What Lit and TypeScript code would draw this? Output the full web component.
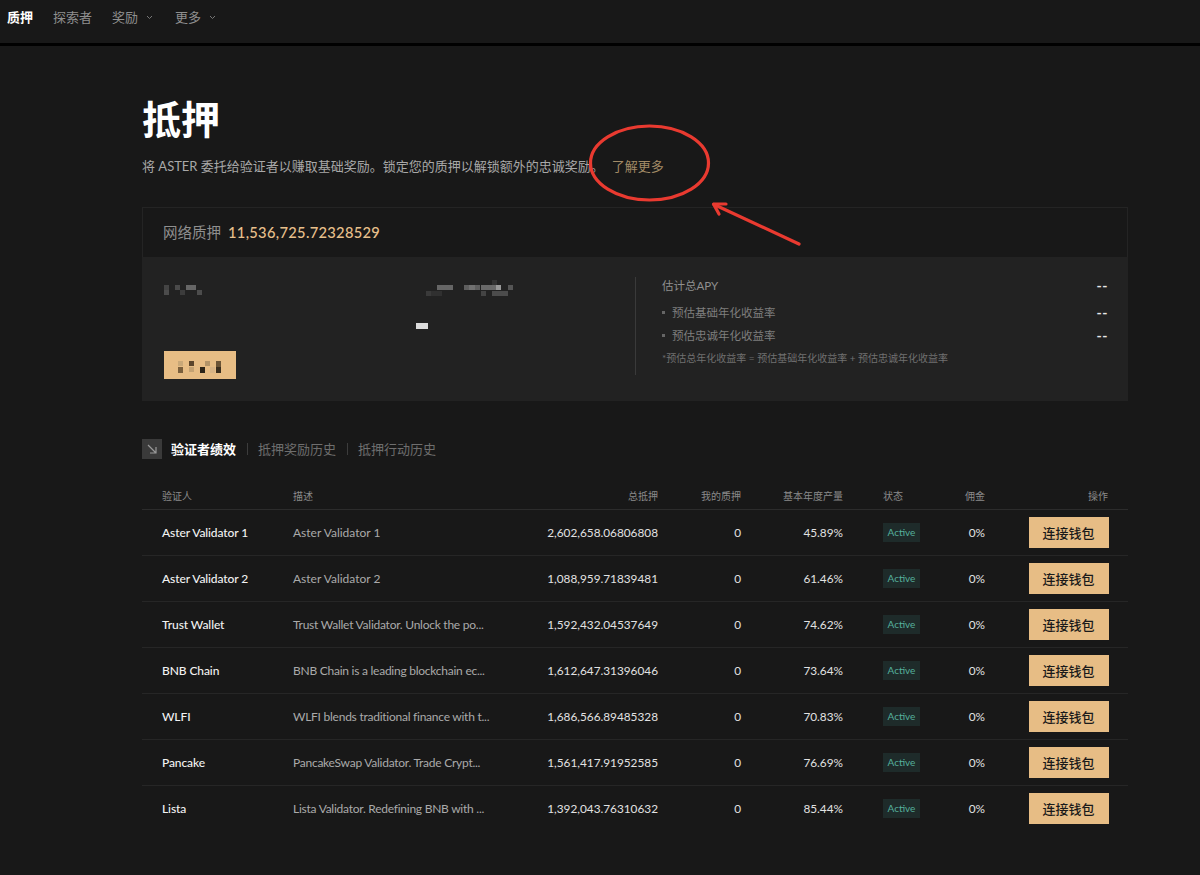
import { LitElement, html, css, svg } from "lit";
import { customElement } from "lit/decorators.js";

const rows = [
  ["Aster Validator 1", "Aster Validator 1", "2,602,658.06806808", "45.89%", false],
  ["Aster Validator 2", "Aster Validator 2", "1,088,959.71839481", "61.46%", false],
  ["Trust Wallet", "Trust Wallet Validator. Unlock the po...", "1,592,432.04537649", "74.62%", true],
  ["BNB Chain", "BNB Chain is a leading blockchain ec...", "1,612,647.31396046", "73.64%", true],
  ["WLFI", "WLFI blends traditional finance with t...", "1,686,566.89485328", "70.83%", true],
  ["Pancake", "PancakeSwap Validator. Trade Crypt...", "1,561,417.91952585", "76.69%", true],
  ["Lista", "Lista Validator. Redefining BNB with ...", "1,392,043.76310632", "85.44%", true],
] as const;

type Px = [number, number, number, number, string];
const mosaicA: Px[] = [
  [0, 0, 5, 5, "#444"], [0, 5, 5, 5, "#4c4c4c"], [11, 0, 5, 5, "#4a4a4a"], [16, 5, 5, 5, "#3c3c3c"],
  [22, 0, 10, 5, "#666"], [33, 5, 5, 5, "#4c4c4c"],
];
const mosaicB: Px[] = [
  [0, 6, 5, 5, "#3a3a3a"], [5, 6, 11, 5, "#303030"], [11, 0, 16, 5, "#666"], [38, 0, 16, 5, "#5e5e5e"], [43, 0, 6, 5, "#707070"],
  [55, 0, 16, 5, "#6a6a6a"], [70, 0, 5, 5, "#999"], [66, 6, 5, 5, "#4a4a4a"], [55, 6, 5, 5, "#444"], [66, -5, 5, 5, "#333"], [82, 0, 5, 5, "#555"],
  [66, 6, 16, 5, "#4c4c4c"],
];
const mosaicC: Px[] = [
  [0, 0, 5, 5, "#c9a878"], [0, 6, 5, 6, "#7a5f3c"], [11, 0, 5, 5, "#5c452b"], [11, 6, 5, 5, "#c4a273"],
  [22, 6, 5, 6, "#2c2418"], [27, 0, 5, 5, "#b39468"], [32, 6, 5, 6, "#d8b485"], [38, 0, 5, 6, "#6b5436"], [38, 6, 5, 6, "#3a2e1e"],
];

@customElement("app-root")
export class AppRoot extends LitElement {
  static styles = css`
    :host {
      display: block;
      position: relative;
      height: 875px;
      overflow: hidden;
      background: #181818;
      color: #fff;
      font-family: "Lato", "Noto Sans CJK SC", sans-serif;
    }
    nav {
      display: flex;
      align-items: center;
      height: 43px;
      padding: 0 7px 10px;
      box-sizing: border-box;
      gap: 20px;
      font-size: 13px;
      color: #8f8f8f;
    }
    .navline { height: 3px; background: #000; }
    nav .on { color: #fff; font-weight: 700; }
    nav .item { display: flex; align-items: center; gap: 8px; margin-right: 2px; }
    nav svg { width: 7px; height: 5px; margin-top: 2px; }
    main { padding: 0 72px 0 142px; }
    h1 {
      margin: 0;
      padding-top: 48px;
      font-size: 39px;
      line-height: 50px;
      font-weight: 700;
    }
    .sub {
      margin-top: 11px;
      font-size: 13px;
      line-height: 22px;
      color: #a8a8a8;
    }
    .sub a { color: #a28a66; margin-left: 8px; }
    .card { margin-top: 30px; }
    .cardhead {
      height: 50px;
      box-sizing: border-box;
      border: 1px solid #242424;
      border-bottom: 0;
      display: flex;
      align-items: center;
      padding: 0 20px 2px;
      gap: 7px;
      font-size: 14.5px;
      color: #8f8f8f;
    }
    .cardhead b { color: #e8c08c; font-weight: 500; font-size: 14.7px; letter-spacing: 0.3px; }
    .cardbody {
      height: 144px;
      background: #222;
      display: grid;
      grid-template-columns: 471px 1fr;
      padding: 18px 20px 27px 22px;
      box-sizing: border-box;
    }
    .mos { display: block; }
    .leftgrid { display: grid; grid-template-columns: 262px 1fr; height: 100%; }
    .col { display: flex; flex-direction: column; }
    .mb { margin-top: 5px; }
    .dash { width: 12px; height: 6px; background: #dcdcdc; margin: 27px 0 0 -10px; }
    .fakebtn {
      width: 72px;
      height: 27.5px;
      background: #e7bd85;
      margin-top: 55px;
      display: flex;
      align-items: center;
      justify-content: center;
    }
    .apy {
      border-left: 1px solid #3a3a3a;
      padding-left: 26px;
      margin-top: 2px;
      height: 98px;
      font-size: 11.5px;
      color: #7e7e7e;
    }
    .apyrow { display: flex; justify-content: space-between; align-items: center; height: 23px; }
    .apyrow.top { color: #8f8f8f; height: 16px; margin-bottom: 7.5px; }
    .apyrow .v { color: #e8e8e8; font-weight: 700; font-size: 14px; letter-spacing: 0.5px; }
    .apyrow .l { display: flex; align-items: center; gap: 7px; }
    .dot { width: 3px; height: 3px; background: #666; }
    .note { font-size: 10px; color: #707070; margin-top: 4.5px; line-height: 14px; }
    .tabs {
      margin-top: 38px;
      display: flex;
      align-items: center;
      font-size: 13px;
      color: #6e6e6e;
      height: 20px;
    }
    .tabs .t { padding-bottom: 2px; }
    .tabicon {
      width: 20px;
      height: 20px;
      background: #3a3a3a;
      margin-right: 9px;
      display: flex;
      align-items: center;
      justify-content: center;
    }
    .tabs .active { color: #fff; font-weight: 700; }
    .sep { width: 1px; height: 12px; background: #3c3c3c; margin: 0 10.5px; }
    .grid { margin-top: 28px; }
    .row {
      display: grid;
      grid-template-columns: 131px 210px 155px 83px 102px 102px 40px 123px;
      align-items: center;
      padding: 0 20px;
      border-bottom: 1px solid #262626;
      font-size: 12px;
    }
    .row:last-child { border-bottom-color: transparent; }
    .head { height: 23px; padding-bottom: 5px; box-sizing: border-box; color: #8a8a8a; font-size: 10px; border-bottom-color: #2c2c2c; }
    .body { height: 46px; box-sizing: border-box; color: #e8e8e8; }
    .r { text-align: right; }
    .status { padding-left: 40px; }
    .name { color: #f2f2f2; font-weight: 500; letter-spacing: -0.1px; }
    .desc { color: #aaa; white-space: nowrap; }
    .desc.long { letter-spacing: -0.25px; }
    .num { color: #e2e2e2; font-size: 11.8px; }
    .badge {
      display: inline-block;
      background: #1e2b2a;
      color: #55b09c;
      font-size: 10px;
      line-height: 19px;
      padding: 0 4.5px;
    }
    .btn {
      justify-self: end;
      align-self: start;
      margin: 7px -0.5px 0 0;
      width: 80px;
      height: 30.5px;
      background: #e7bd85;
      color: #1a1a1a;
      font-size: 13px;
      display: flex;
      align-items: center;
      justify-content: center;
      font-weight: 500;
    }
    .anno { position: absolute; left: 0; top: 0; width: 1200px; height: 875px; pointer-events: none; }
  `;

  private mosaic(px: Px[], w: number, h: number) {
    return html`<svg class="mos" width=${w} height=${h} viewBox="0 -5 ${w} ${h}">
      ${px.map(([x, y, a, b, c]) => svg`<rect x=${x} y=${y} width=${a} height=${b} fill=${c}></rect>`)}
    </svg>`;
  }

  render() {
    const chev = html`<svg viewBox="0 0 7 5" fill="none" stroke="#777" stroke-width="1"><path d="M1 1l2.5 2.5L6 1"/></svg>`;
    return html`
      <nav>
        <span class="on">质押</span>
        <span>探索者</span>
        <span class="item">奖励 ${chev}</span>
        <span class="item">更多 ${chev}</span>
      </nav>
      <div class="navline"></div>
      <main>
        <h1>抵押</h1>
        <div class="sub">将 ASTER 委托给验证者以赚取基础奖励。锁定您的质押以解锁额外的忠诚奖励。<a>了解更多</a></div>
        <section class="card">
          <div class="cardhead">网络质押 <b>11,536,725.72328529</b></div>
          <div class="cardbody">
            <div class="leftgrid">
              <div class="col">
                <div class="mb">${this.mosaic(mosaicA, 42, 16)}</div>
                <div class="fakebtn">${this.mosaic(mosaicC, 44, 18)}</div>
              </div>
              <div class="col">
                <div class="mb">${this.mosaic(mosaicB, 90, 16)}</div>
                <div class="dash"></div>
              </div>
            </div>
            <div class="apy">
              <div class="apyrow top"><span>估计总APY</span><span class="v">--</span></div>
              <div class="apyrow"><span class="l"><i class="dot"></i>预估基础年化收益率</span><span class="v">--</span></div>
              <div class="apyrow"><span class="l"><i class="dot"></i>预估忠诚年化收益率</span><span class="v">--</span></div>
              <div class="note">*预估总年化收益率 = 预估基础年化收益率 + 预估忠诚年化收益率</div>
            </div>
          </div>
        </section>
        <div class="tabs">
          <span class="tabicon"><svg width="10" height="10" viewBox="0 0 10 10" fill="none" stroke="#999" stroke-width="1.2"><path d="M1 1l8 8M9 3v6H3"/></svg></span>
          <span class="t active">验证者绩效</span><i class="sep"></i>
          <span class="t">抵押奖励历史</span><i class="sep"></i>
          <span class="t">抵押行动历史</span>
        </div>
        <div class="grid">
          <div class="row head">
            <span>验证人</span><span>描述</span><span class="r">总抵押</span><span class="r">我的质押</span>
            <span class="r">基本年度产量</span><span class="status">状态</span><span class="r">佣金</span><span class="r">操作</span>
          </div>
          ${rows.map(
            (r) => html`<div class="row body">
              <span class="name">${r[0]}</span>
              <span class="desc ${r[4] ? "long" : ""}">${r[1]}</span>
              <span class="r num">${r[2]}</span>
              <span class="r num">0</span>
              <span class="r num">${r[3]}</span>
              <span class="status"><span class="badge">Active</span></span>
              <span class="r num">0%</span>
              <span class="btn">连接钱包</span>
            </div>`
          )}
        </div>
      </main>
      <svg class="anno" viewBox="0 0 1200 875" fill="none" stroke="#e93a30" stroke-linecap="round" stroke-linejoin="round">
        <ellipse cx="649.5" cy="163" rx="59" ry="37" stroke-width="3.2"></ellipse>
        <path d="M799 244L714 204.5" stroke-width="3.2"></path>
        <path d="M726 204L713.5 204L719 214" stroke-width="3.2"></path>
      </svg>
    `;
  }
}
